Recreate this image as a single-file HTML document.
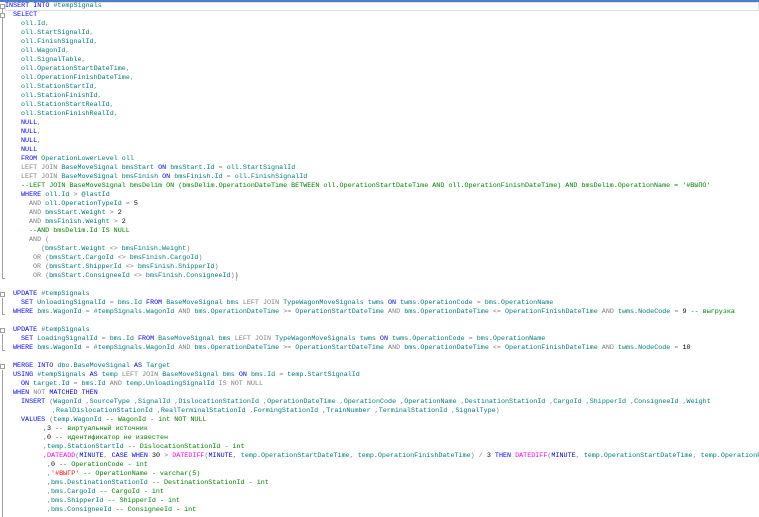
<!DOCTYPE html>
<html><head><meta charset="utf-8"><style>
html,body{margin:0;padding:0;width:759px;height:517px;overflow:hidden}
body{background:#fff;font-family:"Liberation Mono","DejaVu Sans Mono",monospace;font-size:6.72px;color:#007b7b}
#w{position:relative;width:759px;height:517px;overflow:hidden}
.l{position:absolute;height:9px;line-height:9px;white-space:pre}
.k{color:#0000ff}.c{color:#008000}.o{color:#808080}.f{color:#ff00ff}.s{color:#ff0000}.n{color:#000}
.top{position:absolute;left:0;top:0;width:759px;height:2px;background:#4a7fc8}
.cur{position:absolute;left:5px;top:2px;width:754px;height:9px;border:1px solid #e0e0e0;box-sizing:border-box}
.gut{position:absolute;left:2px;width:1px;background:#a0a0a0}
.box{position:absolute;left:0;width:5px;height:5px;border:1px solid #a0a0a0;background:#fff;box-sizing:border-box}
.tick{position:absolute;left:2px;width:3px;height:1px;background:#a0a0a0}
</style></head><body><div id="w">
<div class="top"></div>
<div class="cur"></div>
<div class="gut" style="top:9px;height:270px"></div><div class="tick" style="top:278px"></div>
<div class="gut" style="top:298px;height:16px"></div><div class="tick" style="top:314px"></div>
<div class="gut" style="top:334px;height:16px"></div><div class="tick" style="top:350px"></div>
<div class="gut" style="top:370px;height:147px"></div>
<div class="box" style="top:4px"></div>
<div class="box" style="top:13px"></div>
<div class="box" style="top:292px"></div>
<div class="box" style="top:328px"></div>
<div class="box" style="top:364px"></div>
<div style="position:absolute;left:236px;top:272px;width:1px;height:9px;background:#c8c8c8"></div>

<div class="l" style="top:2px;left:5px"><span class="k">INSERT INTO</span> #tempSignals</div>
<div class="l" style="top:11px;left:13px"><span class="k">SELECT</span></div>
<div class="l" style="top:20px;left:21px">oll.Id<span class="o">,</span></div>
<div class="l" style="top:29px;left:21px">oll.StartSignalId<span class="o">,</span></div>
<div class="l" style="top:38px;left:21px">oll.FinishSignalId<span class="o">,</span></div>
<div class="l" style="top:47px;left:21px">oll.WagonId<span class="o">,</span></div>
<div class="l" style="top:56px;left:21px">oll.SignalTable<span class="o">,</span></div>
<div class="l" style="top:65px;left:21px">oll.OperationStartDateTime<span class="o">,</span></div>
<div class="l" style="top:74px;left:21px">oll.OperationFinishDateTime<span class="o">,</span></div>
<div class="l" style="top:83px;left:21px">oll.StationStartId<span class="o">,</span></div>
<div class="l" style="top:92px;left:21px">oll.StationFinishId<span class="o">,</span></div>
<div class="l" style="top:101px;left:21px">oll.StationStartRealId<span class="o">,</span></div>
<div class="l" style="top:110px;left:21px">oll.StationFinishRealId<span class="o">,</span></div>
<div class="l" style="top:119px;left:21px"><span class="k">NULL</span><span class="o">,</span></div>
<div class="l" style="top:128px;left:21px"><span class="k">NULL</span><span class="o">,</span></div>
<div class="l" style="top:137px;left:21px"><span class="k">NULL</span><span class="o">,</span></div>
<div class="l" style="top:146px;left:21px"><span class="k">NULL</span></div>
<div class="l" style="top:155px;left:21px"><span class="k">FROM</span> OperationLowerLevel oll</div>
<div class="l" style="top:164px;left:21px"><span class="o">LEFT JOIN</span> BaseMoveSignal bmsStart <span class="k">ON</span> bmsStart.Id <span class="o">=</span> oll.StartSignalId</div>
<div class="l" style="top:173px;left:21px"><span class="o">LEFT JOIN</span> BaseMoveSignal bmsFinish <span class="k">ON</span> bmsFinish.Id <span class="o">=</span> oll.FinishSignalId</div>
<div class="l c" style="top:182px;left:21px">--LEFT JOIN BaseMoveSignal bmsDelim ON (bmsDelim.OperationDateTime BETWEEN oll.OperationStartDateTime AND oll.OperationFinishDateTime) AND bmsDelim.OperationName = '#ВЫПО'</div>
<div class="l" style="top:191px;left:21px"><span class="k">WHERE</span> oll.Id <span class="o">&gt;</span> @lastId</div>
<div class="l" style="top:200px;left:29px"><span class="o">AND</span> oll.OperationTypeId <span class="o">=</span> <span class="n">5</span></div>
<div class="l" style="top:209px;left:29px"><span class="o">AND</span> bmsStart.Weight <span class="o">&gt;</span> <span class="n">2</span></div>
<div class="l" style="top:218px;left:29px"><span class="o">AND</span> bmsFinish.Weight <span class="o">&gt;</span> <span class="n">2</span></div>
<div class="l c" style="top:227px;left:29px">--AND bmsDelim.Id IS NULL</div>
<div class="l" style="top:236px;left:29px"><span class="o">AND (</span></div>
<div class="l" style="top:245px;left:41px"><span class="o">(</span>bmsStart.Weight <span class="o">&lt;&gt;</span> bmsFinish.Weight<span class="o">)</span></div>
<div class="l" style="top:254px;left:33px"><span class="o">OR (</span>bmsStart.CargoId <span class="o">&lt;&gt;</span> bmsFinish.CargoId<span class="o">)</span></div>
<div class="l" style="top:263px;left:33px"><span class="o">OR (</span>bmsStart.ShipperId <span class="o">&lt;&gt;</span> bmsFinish.ShipperId<span class="o">)</span></div>
<div class="l" style="top:272px;left:33px"><span class="o">OR (</span>bmsStart.ConsigneeId <span class="o">&lt;&gt;</span> bmsFinish.ConsigneeId<span class="o">))</span></div>

<div class="l" style="top:290px;left:13px"><span class="k">UPDATE</span> #tempSignals</div>
<div class="l" style="top:299px;left:21px"><span class="k">SET</span> UnloadingSignalId <span class="o">=</span> bms.Id <span class="k">FROM</span> BaseMoveSignal bms <span class="o">LEFT JOIN</span> TypeWagonMoveSignals twms <span class="k">ON</span> twms.OperationCode <span class="o">=</span> bms.OperationName</div>
<div class="l" style="top:308px;left:13px"><span class="k">WHERE</span> bms.WagonId <span class="o">=</span> #tempSignals.WagonId <span class="o">AND</span> bms.OperationDateTime <span class="o">&gt;=</span> OperationStartDateTime <span class="o">AND</span> bms.OperationDateTime <span class="o">&lt;=</span> OperationFinishDateTime <span class="o">AND</span> twms.NodeCode <span class="o">=</span> <span class="n">9</span> <span class="c">-- выгрузка</span></div>

<div class="l" style="top:326px;left:13px"><span class="k">UPDATE</span> #tempSignals</div>
<div class="l" style="top:335px;left:21px"><span class="k">SET</span> LoadingSignalId <span class="o">=</span> bms.Id <span class="k">FROM</span> BaseMoveSignal bms <span class="o">LEFT JOIN</span> TypeWagonMoveSignals twms <span class="k">ON</span> twms.OperationCode <span class="o">=</span> bms.OperationName</div>
<div class="l" style="top:344px;left:13px"><span class="k">WHERE</span> bms.WagonId <span class="o">=</span> #tempSignals.WagonId <span class="o">AND</span> bms.OperationDateTime <span class="o">&gt;=</span> OperationStartDateTime <span class="o">AND</span> bms.OperationDateTime <span class="o">&lt;=</span> OperationFinishDateTime <span class="o">AND</span> twms.NodeCode <span class="o">=</span> <span class="n">10</span></div>

<div class="l" style="top:362px;left:13px"><span class="k">MERGE INTO</span> dbo.BaseMoveSignal <span class="k">AS</span> Target</div>
<div class="l" style="top:371px;left:13px"><span class="k">USING</span> #tempSignals <span class="k">AS</span> temp <span class="o">LEFT JOIN</span> BaseMoveSignal bms <span class="k">ON</span> bms.Id <span class="o">=</span> temp.StartSignalId</div>
<div class="l" style="top:380px;left:21px"><span class="k">ON</span> target.Id <span class="o">=</span> bms.Id <span class="o">AND</span> temp.UnloadingSignalId <span class="o">IS NOT NULL</span></div>
<div class="l" style="top:389px;left:13px"><span class="k">WHEN</span> <span class="o">NOT</span> <span class="k">MATCHED THEN</span></div>
<div class="l" style="top:398px;left:21px"><span class="k">INSERT</span> <span class="o">(</span>WagonId <span class="o">,</span>SourceType <span class="o">,</span>SignalId <span class="o">,</span>DislocationStationId <span class="o">,</span>OperationDateTime <span class="o">,</span>OperationCode <span class="o">,</span>OperationName <span class="o">,</span>DestinationStationId <span class="o">,</span>CargoId <span class="o">,</span>ShipperId <span class="o">,</span>ConsigneeId <span class="o">,</span>Weight</div>
<div class="l" style="top:407px;left:52px"><span class="o">,</span>RealDislocationStationId <span class="o">,</span>RealTerminalStationId <span class="o">,</span>FormingStationId <span class="o">,</span>TrainNumber <span class="o">,</span>TerminalStationId <span class="o">,</span>SignalType<span class="o">)</span></div>
<div class="l" style="top:416px;left:21px"><span class="k">VALUES</span> <span class="o">(</span>temp.WagonId <span class="c">-- WagonId - int NOT NULL</span></div>
<div class="l" style="top:425px;left:43px"><span class="o">,</span><span class="n">3</span> <span class="c">-- виртуальный источник</span></div>
<div class="l" style="top:434px;left:43px"><span class="o">,</span><span class="n">0</span> <span class="c">-- идентификатор не известен</span></div>
<div class="l" style="top:443px;left:43px"><span class="o">,</span>temp.StationStartId <span class="c">-- DislocationStationId - int</span></div>
<div class="l" style="top:452px;left:43px;width:716px;overflow:hidden"><span class="o">,</span><span class="f">DATEADD</span><span class="o">(</span><span class="k">MINUTE</span><span class="o">,</span> <span class="k">CASE WHEN</span> <span class="n">30</span> <span class="o">&gt;</span> <span class="f">DATEDIFF</span><span class="o">(</span><span class="k">MINUTE</span><span class="o">,</span> temp.OperationStartDateTime<span class="o">,</span> temp.OperationFinishDateTime<span class="o">)</span> <span class="o">/</span> <span class="n">3</span> <span class="k">THEN</span> <span class="f">DATEDIFF</span><span class="o">(</span><span class="k">MINUTE</span><span class="o">,</span> temp.OperationStartDateTime<span class="o">,</span> temp.OperationFi</div>
<div class="l" style="top:461px;left:47px"><span class="o">,</span><span class="n">0</span> <span class="c">-- OperationCode - int</span></div>
<div class="l" style="top:470px;left:47px"><span class="o">,</span><span class="s">'#ВЫГР'</span> <span class="c">-- OperationName - varchar(5)</span></div>
<div class="l" style="top:479px;left:47px"><span class="o">,</span>bms.DestinationStationId <span class="c">-- DestinationStationId - int</span></div>
<div class="l" style="top:488px;left:47px"><span class="o">,</span>bms.CargoId <span class="c">-- CargoId - int</span></div>
<div class="l" style="top:497px;left:47px"><span class="o">,</span>bms.ShipperId <span class="c">-- ShipperId - int</span></div>
<div class="l" style="top:506px;left:47px"><span class="o">,</span>bms.ConsigneeId <span class="c">-- ConsigneeId - int</span></div>
</div></body></html>
